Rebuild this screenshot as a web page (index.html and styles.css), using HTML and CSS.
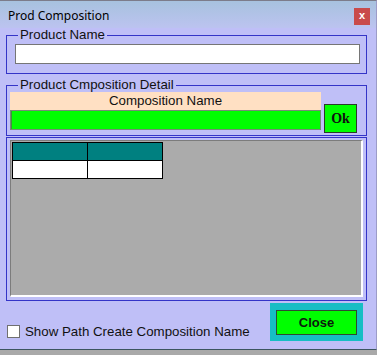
FILE: index.html
```html
<!DOCTYPE html>
<html>
<head>
<meta charset="utf-8">
<link rel="stylesheet" href="styles.css">
</head>
<body>
<div class="window">
  <div class="titlebar">
    <span class="title">Prod Composition</span>
    <span class="close-x">x</span>
  </div>
  <fieldset class="group">
    <legend>Product Name</legend>
    <input class="name-input" type="text">
  </fieldset>
  <fieldset class="group detail">
    <legend>Product Cmposition Detail</legend>
    <div class="detail-row">
      <div class="detail-col">
        <div class="comp-header">Composition Name</div>
        <input class="comp-input" type="text">
      </div>
      <button class="ok-btn">Ok</button>
    </div>
  </fieldset>
  <div class="grid-panel">
    <div class="grid-box">
      <table class="grid">
        <tr class="head"><td></td><td></td></tr>
        <tr class="row"><td></td><td></td></tr>
      </table>
    </div>
  </div>
  <div class="footer">
    <label class="check-label"><input type="checkbox" class="check"><span>Show Path Create Composition Name</span></label>
    <div class="close-frame"><button class="close-btn">Close</button></div>
  </div>
</div>
</body>
</html>
```

FILE: styles.css
```css
html, body {
  margin: 0;
  padding: 0;
}
body {
  background: #a9a9a9;
  font-family: "Liberation Sans", Arial, sans-serif;
}
.window {
  width: 377px;
  height: 350px;
  box-sizing: border-box;
  background: #bfbff7;
  border-top: 1px solid #7c7c8a;
  border-bottom: 1px solid #3c5560;
  border-right: 1px solid #9c9cc8;
  overflow: hidden;
}
.titlebar {
  height: 27px;
  box-sizing: border-box;
  padding: 7px 6px 0 8px;
  display: flex;
  justify-content: space-between;
  align-items: flex-start;
  background: linear-gradient(#a7c2de, #bcc3f0);
}
.title {
  font-family: "Noto Sans", sans-serif;
  font-size: 12px;
  line-height: 16px;
  color: #000;
}
.close-x {
  width: 16px;
  height: 17px;
  background: #c94b4b;
  color: #fff;
  font-family: "Liberation Sans", sans-serif;
  font-weight: bold;
  font-size: 11px;
  line-height: 15px;
  text-align: center;
}
.group {
  margin: 0 0 0 6px;
  padding: 0;
  width: 361px;
  box-sizing: border-box;
  border: 1px solid #3434c8;
  min-width: 0;
}
.group legend {
  margin-left: 11px;
  padding: 0 2px;
  font-size: 13.3px;
  line-height: 14px;
  color: #111;
}
.name-input {
  display: block;
  margin: 2px 6px 9px 8px;
  width: 345px;
  height: 20px;
  box-sizing: border-box;
  border: 1px solid #767676;
  background: #fff;
  padding: 0;
}
.detail {
  margin-top: 4px;
}
.detail-row {
  display: flex;
  align-items: flex-end;
  padding: 0 0 2px 3px;
}
.detail-col {
  width: 311px;
  margin-bottom: 3px;
}
.comp-header {
  height: 18px;
  line-height: 18px;
  background: #ffe0c3;
  text-align: center;
  font-size: 13.3px;
  color: #111;
}
.comp-input {
  display: block;
  width: 311px;
  height: 20px;
  box-sizing: border-box;
  margin: 0;
  padding: 0;
  border: 1px solid #768a76;
  box-shadow: inset 1px 0 #3f8f3f;
  background: #00ff00;
}
.ok-btn {
  margin-left: 3px;
  width: 33px;
  height: 29px;
  padding: 0;
  border: 1px solid #2a3a2a;
  background: #00ff00;
  font-family: "Liberation Serif", serif;
  font-weight: bold;
  font-size: 14px;
  color: #111;
}
.grid-panel {
  margin: 1px 0 0 6px;
  width: 361px;
  height: 164px;
  box-sizing: border-box;
  border: 1px solid #3434c8;
  padding: 2px 3px 3px 3px;
}
.grid-box {
  height: 100%;
  box-sizing: border-box;
  background: #ababab;
  border-top: 1px solid #7c7c7c;
  border-left: 1px solid #7c7c7c;
  border-right: 2px solid #fff;
  border-bottom: 2px solid #fff;
  padding: 1px 0 0 1px;
}
.grid {
  border-collapse: collapse;
  table-layout: fixed;
  width: 151px;
}
.grid td {
  border: 1px solid #000;
  padding: 0;
}
.grid .head td {
  background: #008080;
  height: 17px;
}
.grid .row td {
  background: #fff;
  height: 17px;
}
.footer {
  display: flex;
  justify-content: space-between;
  align-items: flex-start;
  margin-top: 2px;
  padding: 0 13px 0 7px;
}
.check-label {
  margin-top: 22px;
  display: flex;
  align-items: center;
  gap: 5px;
  font-size: 13.3px;
  line-height: 13px;
  color: #111;
}
.check {
  appearance: none;
  -webkit-appearance: none;
  margin: 0;
  width: 13px;
  height: 13px;
  box-sizing: border-box;
  border: 1px solid #707070;
  background: #fff;
}
.close-frame {
  width: 93px;
  height: 38px;
  box-sizing: border-box;
  padding: 7px 6px 6px 6px;
  background: #16bec4;
}
.close-btn {
  display: block;
  width: 81px;
  height: 25px;
  padding: 0;
  margin: 0;
  border: 1px solid #2f4a2f;
  background: #00ff00;
  font-family: "Liberation Sans", sans-serif;
  font-weight: bold;
  font-size: 13px;
  color: #0d1a0d;
}
```
